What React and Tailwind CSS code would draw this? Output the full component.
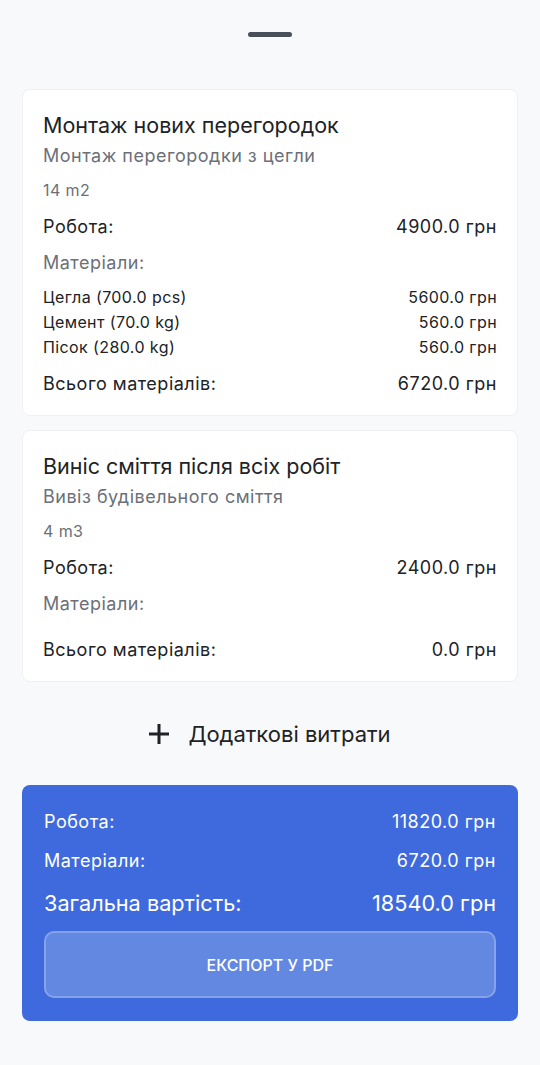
const works = [
  {
    title: 'Монтаж нових перегородок',
    desc: 'Монтаж перегородки з цегли',
    qty: '14 m2',
    labor: '4900.0 грн',
    materials: [
      ['Цегла (700.0 pcs)', '5600.0 грн'],
      ['Цемент (70.0 kg)', '560.0 грн'],
      ['Пісок (280.0 kg)', '560.0 грн'],
    ],
    total: '6720.0 грн',
  },
  {
    title: 'Виніс сміття після всіх робіт',
    desc: 'Вивіз будівельного сміття',
    qty: '4 m3',
    labor: '2400.0 грн',
    materials: [],
    total: '0.0 грн',
  },
]

function WorkCard({ w }) {
  return (
    <div className="bg-white rounded-lg border border-[#eef0f3] px-5 pt-[21px] pb-[19px]">
      <div className="text-[21.5px] leading-[28px] text-[#202226]">{w.title}</div>
      <div className="mt-[5px] text-[18px] leading-[24px] tracking-[0.5px] text-[#6b7079]">{w.desc}</div>
      <div className="mt-[12px] text-[16px] leading-[20px] tracking-[0.4px] text-[#6b7079]">{w.qty}</div>
      <div className="mt-[15px] flex justify-between text-[18px] leading-[24px] tracking-[0.5px] text-[#202226]">
        <span>Робота:</span><span>{w.labor}</span>
      </div>
      <div className="mt-[12px] text-[18px] leading-[24px] tracking-[0.5px] text-[#6b7079]">Матеріали:</div>
      {w.materials.length > 0 ? (
        <div className="mt-[10px]">
          {w.materials.map(([n, p]) => (
            <div key={n} className="flex justify-between text-[16px] leading-[25px] tracking-[0.4px] text-[#202226]">
              <span>{n}</span><span>{p}</span>
            </div>
          ))}
        </div>
      ) : (
        <div className="h-[10px]" />
      )}
      <div className="mt-[12px] flex justify-between text-[18px] leading-[24px] tracking-[0.5px] text-[#202226]">
        <span>Всього матеріалів:</span><span>{w.total}</span>
      </div>
    </div>
  )
}

export default function App() {
  return (
    <div className="min-h-[1065px] bg-[#f8f9fb] font-['Inter',sans-serif] px-[22px]">
      <div className="flex justify-center pt-[32px]">
        <div className="w-[44px] h-[5px] rounded-full bg-[#4a5059]" />
      </div>

      <div className="mt-[52px] flex flex-col gap-[14px]">
        {works.map((w) => <WorkCard key={w.title} w={w} />)}
      </div>

      <button className="mt-[38px] w-full flex items-center justify-center gap-[19px] text-[22px] leading-[28px] text-[#202226]">
        <svg width="20" height="20" viewBox="0 0 20 20" className="shrink-0">
          <path d="M0 10H20M10 0V20" stroke="#202226" strokeWidth="3" />
        </svg>
        <span>Додаткові витрати</span>
      </button>

      <div className="mt-[37px] bg-[#3f6ade] rounded-lg px-[22px] pt-[25px] pb-[23px] text-white">
        <div className="flex justify-between text-[18px] leading-[24px] tracking-[0.5px]">
          <span>Робота:</span><span>11820.0 грн</span>
        </div>
        <div className="mt-[15px] flex justify-between text-[18px] leading-[24px] tracking-[0.5px]">
          <span>Матеріали:</span><span>6720.0 грн</span>
        </div>
        <div className="mt-[16px] flex justify-between text-[21.7px] leading-[28px]">
          <span>Загальна вартість:</span><span>18540.0 грн</span>
        </div>
        <button className="mt-[14px] w-full h-[67px] rounded-[10px] bg-[#6388e2] border-2 border-[#86a2ea] text-[16px] font-medium">
          ЕКСПОРТ У PDF
        </button>
      </div>
    </div>
  )
}
